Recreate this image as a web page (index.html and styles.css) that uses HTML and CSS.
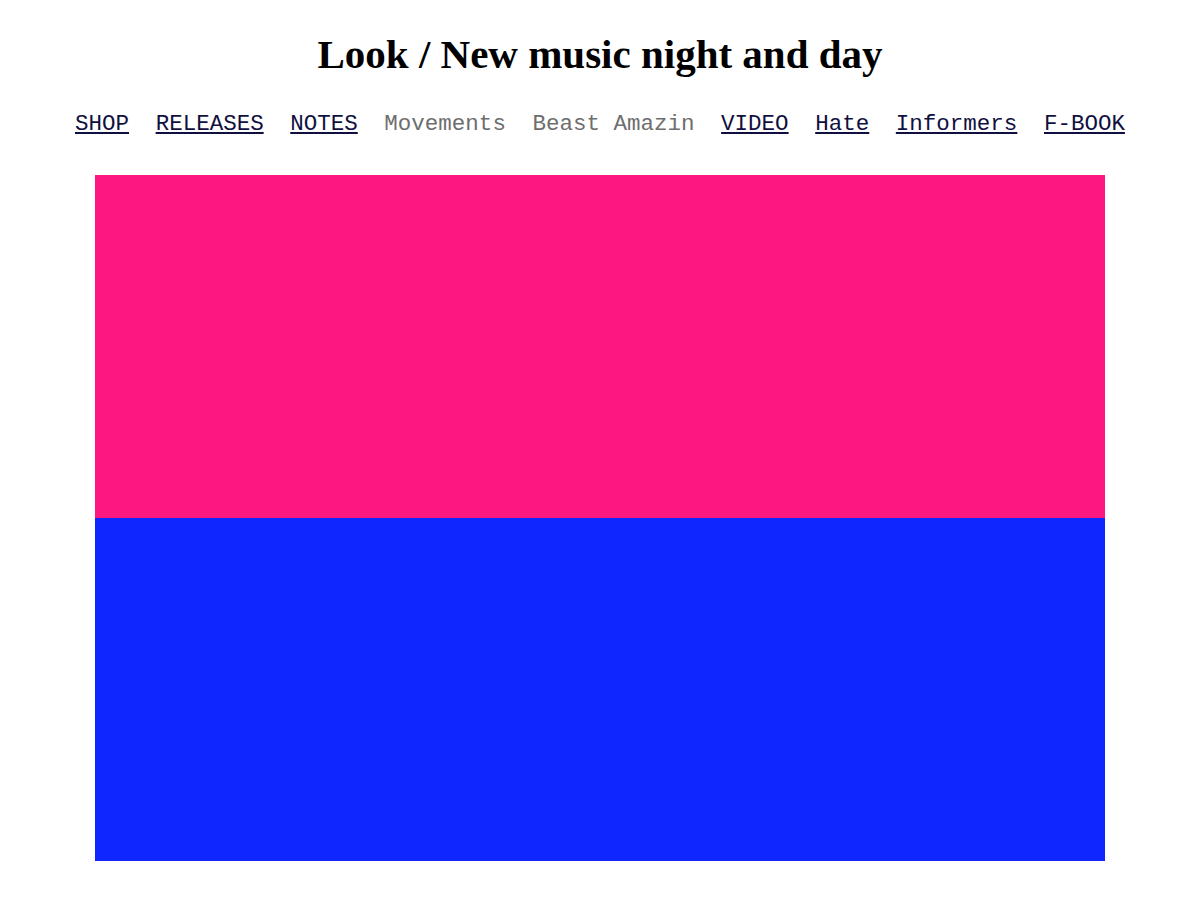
FILE: index.html
```html
<!DOCTYPE html>
<html>
<head>
<meta charset="utf-8">
<title>Look / New music night and day</title>
<link rel="stylesheet" href="styles.css">
</head>
<body>
<header class="header">
  <h1 class="title">Look / New music night and day</h1>
  <nav class="nav">
    <a class="nav-link" href="#">SHOP</a>
    <a class="nav-link" href="#">RELEASES</a>
    <a class="nav-link" href="#">NOTES</a>
    <span class="nav-item">Movements</span>
    <span class="nav-item">Beast Amazin</span>
    <a class="nav-link" href="#">VIDEO</a>
    <a class="nav-link" href="#">Hate</a>
    <a class="nav-link" href="#">Informers</a>
    <a class="nav-link" href="#">F-BOOK</a>
  </nav>
</header>
<main class="stage">
  <div class="band band-pink"></div>
  <div class="band band-blue"></div>
</main>
</body>
</html>
```
FILE: styles.css
```css
html, body {
  margin: 0;
  padding: 0;
  background: #ffffff;
}
body {
  font-family: "Liberation Serif", "Times New Roman", serif;
  color: #000;
}
.header {
  display: flex;
  flex-direction: column;
  align-items: center;
}
.title {
  margin: 28px 0 0;
  font-size: 41px;
  line-height: 52px;
  font-weight: bold;
}
.nav {
  display: flex;
  justify-content: center;
  gap: 26.6px;
  margin-top: 31px;
  font-family: "Liberation Mono", "Courier New", monospace;
  font-size: 22.5px;
  line-height: 26px;
}
.nav-link {
  color: #101040;
  text-decoration: underline;
}
.nav-item {
  color: #6e6e6e;
}
.stage {
  display: flex;
  flex-direction: column;
  width: 1010px;
  margin: 38px auto 0;
}
.band {
  height: 343px;
}
.band-pink {
  background: #fd1880;
}
.band-blue {
  background: #1026ff;
}
```
